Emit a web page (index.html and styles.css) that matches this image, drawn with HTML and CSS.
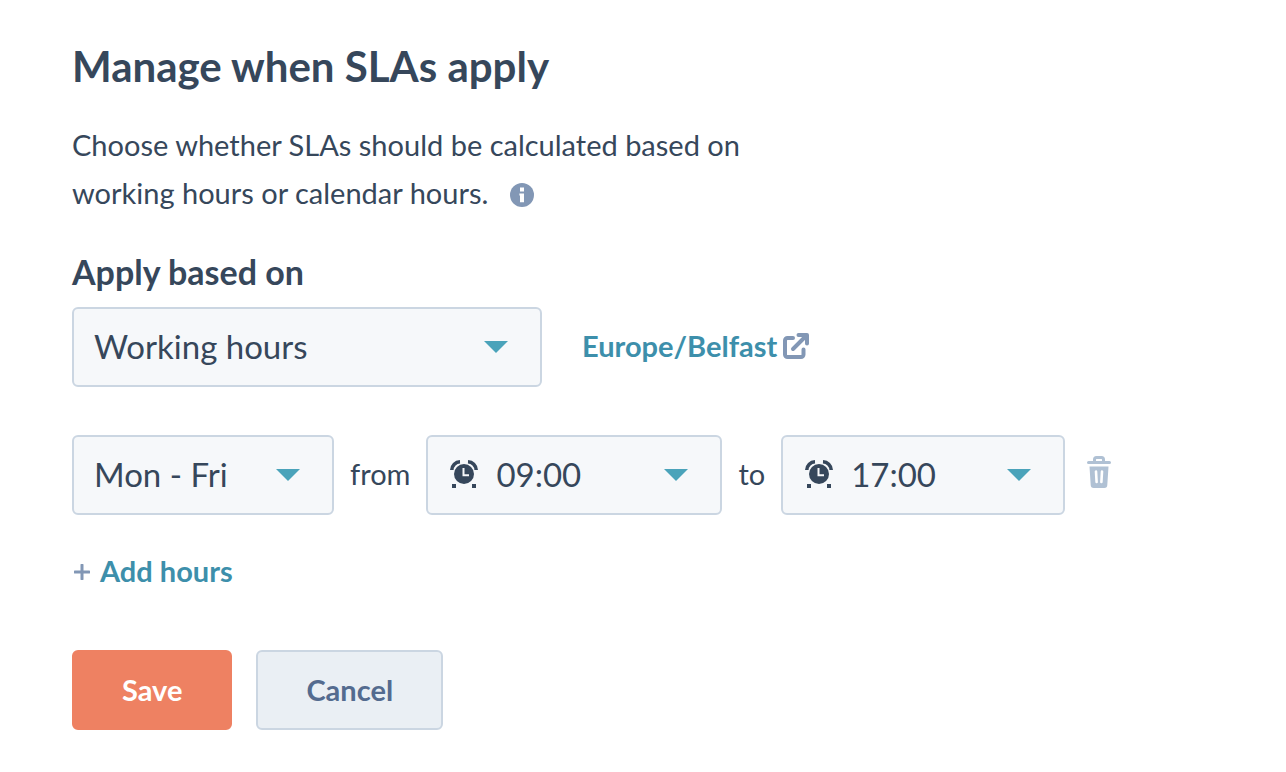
FILE: index.html
```html
<!DOCTYPE html>
<html lang="en">
<head>
    <meta charset="UTF-8">
    <meta name="viewport" content="width=device-width, initial-scale=1.0">
    <title>Manage when SLAs apply</title>
    <link rel="stylesheet" href="styles.css">
</head>
<body>
    <svg class="sprite" aria-hidden="true">
        <symbol id="caret" viewBox="0 0 24 12"><path d="M0 0h24L12 12z"/></symbol>
        <symbol id="alarm" viewBox="0 0 28 28">
            <circle cx="14" cy="14" r="10"/>
            <path d="M1.800 10C2 5.500 5.500 2 10 1.800M26.200 10C26 5.500 22.500 2 18 1.800" fill="none" stroke="currentColor" stroke-width="3.600"/>
            <path d="M2 24h4v4H2zM22 24h4v4h-4z"/>
            <path d="M13.500 8v7.200H19" fill="none" stroke="#f6f8fa" stroke-width="2"/>
        </symbol>
    </svg>

    <form class="sla-form">
        <h1>Manage when SLAs apply</h1>
        <p class="intro">Choose whether SLAs should be calculated based on working hours or calendar hours.
            <svg class="info" viewBox="0 0 24 24" role="img" aria-label="Info">
                <circle cx="12" cy="12" r="12"/>
                <path d="M10 4.500h4v4h-4zM9.400 10.500H14v8.700h-4v-6.700h-.600z" fill="#fff"/>
            </svg>
        </p>

        <label class="label" for="basis">Apply based on</label>
        <div class="row basis-row">
            <div class="field basis">
                <select id="basis">
                    <option>Working hours</option>
                    <option>Calendar hours</option>
                </select>
                <svg class="caret"><use href="#caret"/></svg>
            </div>
            <a class="link" href="#">Europe/Belfast
                <svg class="external" viewBox="0 0 26 26">
                    <path d="M10 5H4.500a2.500 2.500 0 0 0-2.500 2.500v14A2.500 2.500 0 0 0 4.500 24H18a2.500 2.500 0 0 0 2.500-2.500V16.500M10 16L22 4"/>
                    <path d="M15.500 2H24v8.500"/>
                </svg>
            </a>
        </div>

        <div class="row hours-row">
            <div class="field days">
                <select aria-label="Days">
                    <option>Mon - Fri</option>
                    <option>Sat - Sun</option>
                </select>
                <svg class="caret"><use href="#caret"/></svg>
            </div>
            <label for="from">from</label>
            <div class="field start">
                <svg class="alarm"><use href="#alarm"/></svg>
                <select id="from" class="time">
                    <option>09:00</option>
                    <option>10:00</option>
                </select>
                <svg class="caret"><use href="#caret"/></svg>
            </div>
            <label for="to">to</label>
            <div class="field end">
                <svg class="alarm"><use href="#alarm"/></svg>
                <select id="to" class="time">
                    <option>17:00</option>
                    <option>18:00</option>
                </select>
                <svg class="caret"><use href="#caret"/></svg>
            </div>
            <button type="button" class="trash" aria-label="Delete hours">
                <svg viewBox="0 0 24 32">
                    <path d="M7.500 5V3.500a2 2 0 0 1 2-2h5a2 2 0 0 1 2 2V5M1.500 6.500h21" fill="none" stroke="currentColor" stroke-width="3" stroke-linecap="round"/>
                    <path d="M2.500 10.500h19L20.300 29a3 3 0 0 1-3 3H6.700a3 3 0 0 1-3-3z"/>
                    <path d="M9 15.500l.600 10.500M15 15.500L14.400 26" stroke="#fff" stroke-width="2.600" stroke-linecap="round"/>
                </svg>
            </button>
        </div>

        <button type="button" class="link add">
            <svg class="plus" viewBox="0 0 16 16"><path d="M8 1v14M1 8h14"/></svg>
            Add hours
        </button>

        <div class="actions">
            <button type="submit" class="btn save">Save</button>
            <button type="button" class="btn cancel">Cancel</button>
        </div>
    </form>
</body>
</html>
```
FILE: styles.css
```css
* {
    box-sizing: border-box;
}
body {
    margin: 0;
    background-color: #fff;
    color: #36475b;
    font-family: Lato, "Liberation Sans", sans-serif;
    font-size: 29px;
}
.sprite {
    display: none;
}
.sla-form {
    padding: 38px 72px 42px;
}
h1 {
    margin: 0 0 27px;
    font-size: 42px;
    line-height: 56px;
    font-weight: 700;
}
.intro {
    max-width: 720px;
    margin: 0 0 31px;
    line-height: 48px;
}
.info {
    width: 24px;
    height: 24px;
    margin-left: 14px;
    vertical-align: -3px;
    fill: #8297b5;
}
.label {
    display: block;
    margin-bottom: 11px;
    font-size: 34px;
    line-height: 48px;
    font-weight: 700;
}
.row {
    display: flex;
    align-items: center;
    gap: 16px;
}
.row label {
    padding-bottom: 4px;
}
.basis-row {
    gap: 40px;
    margin-bottom: 48px;
}
.field {
    position: relative;
}
.basis {
    width: 470px;
}
.days {
    width: 262px;
}
.start {
    width: 296px;
}
.end {
    width: 284px;
}
select {
    display: block;
    width: 100%;
    height: 80px;
    padding: 0 60px 2px 20px;
    appearance: none;
    border: 2px solid #cbd6e2;
    border-radius: 6px;
    background-color: #f6f8fa;
    color: inherit;
    font-family: inherit;
    font-size: 33px;
}
.time {
    padding-left: 68px;
}
.caret {
    position: absolute;
    top: 34px;
    right: 34px;
    width: 24px;
    height: 12px;
    fill: #4aa3ba;
    pointer-events: none;
}
.alarm {
    position: absolute;
    top: 25px;
    left: 24px;
    width: 28px;
    height: 28px;
    fill: currentColor;
    pointer-events: none;
}
.link {
    display: inline-flex;
    align-items: center;
    gap: 6px;
    padding: 0 0 2px;
    color: #3d8fab;
    font-family: inherit;
    font-size: 29px;
    line-height: 48px;
    font-weight: 700;
    text-decoration: none;
}
.external {
    width: 26px;
    height: 26px;
    fill: none;
    stroke: #8297b5;
    stroke-width: 4;
    stroke-linecap: round;
    stroke-linejoin: round;
}
button {
    border: 0;
    background: none;
    font-family: inherit;
    cursor: pointer;
}
.trash {
    padding: 0;
    margin-left: 6px;
    color: #b0c1d4;
}
.trash svg {
    display: block;
    width: 24px;
    height: 32px;
    margin-bottom: 6px;
    fill: currentColor;
}
.add {
    gap: 10px;
    margin: 32px 0 55px;
    padding: 0 2px;
}
.plus {
    width: 16px;
    height: 16px;
    margin-top: 2px;
    fill: none;
    stroke: #8297b5;
    stroke-width: 3;
    stroke-linecap: round;
}
.actions {
    display: flex;
    gap: 24px;
}
.btn {
    height: 80px;
    padding: 0 48px 2px;
    border: 2px solid #ee8162;
    border-radius: 6px;
    font-size: 29px;
    font-weight: 700;
}
.save {
    background-color: #ee8162;
    color: #fff;
}
.cancel {
    border-color: #cbd6e2;
    background-color: #eaeff4;
    color: #546b8f;
}
```
